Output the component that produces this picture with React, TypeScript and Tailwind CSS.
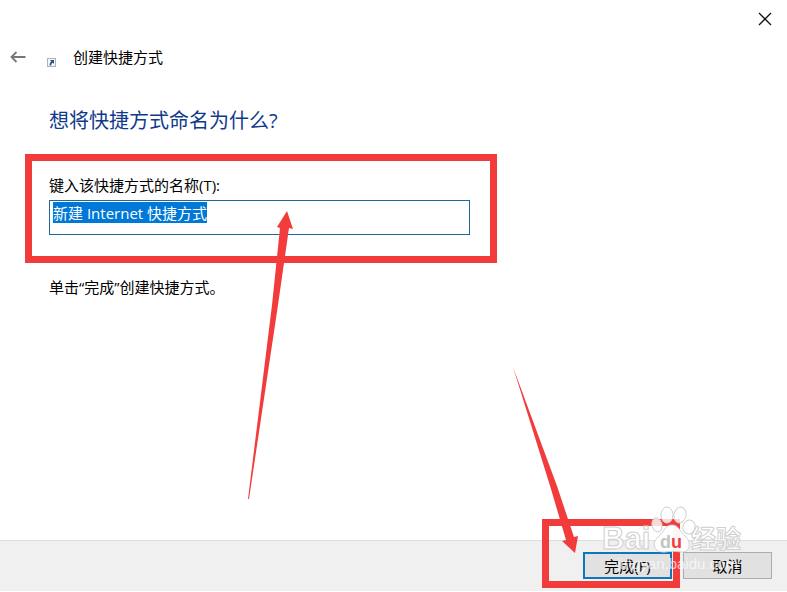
import { useEffect, useRef } from "react";

const FONT = "font-['Open_Sans','Noto_Sans_CJK_SC',sans-serif]";

function BackIcon() {
  return (
    <svg width="16" height="12" viewBox="0 0 16 12" fill="none" stroke="#777" strokeWidth="1.8">
      <path d="M15.5 6H1.5M6.5 1L1.5 6l5 5" />
    </svg>
  );
}

function ShortcutIcon() {
  return (
    <svg width="9" height="9" viewBox="0 0 9 9">
      <rect x="0.5" y="0.5" width="8" height="8" fill="#f4f7fa" stroke="#a9b4c0" />
      <path d="M3 2h4v4L5.8 4.8C4.6 5.6 4.2 6.4 4.2 7.6H2.6C2.4 5.8 3 4.4 4.3 3.4z" fill="#2f5480" />
    </svg>
  );
}

function FieldArrow() {
  return (
    <svg className="pointer-events-none absolute top-[35px] left-[198px]" width="50" height="292" viewBox="0 0 50 292">
      <path d="M1 289L25 95L33 18L30 17L40 1L46 19L42 18L31 95L2 289z" fill="#f23c3c" />
    </svg>
  );
}

function FinishArrow() {
  return (
    <svg className="pointer-events-none absolute right-[208px] bottom-[37px]" width="68" height="188" viewBox="0 0 68 188">
      <path d="M2 1L40 123L55 174L51 175L64 187L67 170L63 171L46 120z" fill="#f23c3c" />
    </svg>
  );
}

function Watermark() {
  return (
    <svg
      className="pointer-events-none absolute right-[36px] bottom-[12px] font-['Liberation_Sans','Noto_Sans_CJK_SC',sans-serif]"
      width="152"
      height="74"
      viewBox="0 0 152 74"
      fill="#fff"
      fillOpacity="0.8"
      stroke="#cfcfcf"
      strokeWidth="1"
    >
      <text x="3" y="44" fontSize="31" fontWeight="700">Bai</text>
      <text x="92" y="43" fontSize="25" fontWeight="700">经验</text>
      <ellipse cx="58" cy="20" rx="5" ry="7" transform="rotate(-15 58 20)" />
      <ellipse cx="68" cy="10" rx="6" ry="8" />
      <ellipse cx="81" cy="10" rx="6" ry="8" transform="rotate(12 81 10)" />
      <ellipse cx="90" cy="22" rx="6" ry="7" transform="rotate(20 90 22)" />
      <path d="M73 20c7 0 8 7 13 11 7 6 5 17-4 16-6-1-10-1-16 0-11 1-14-9-7-15 6-5 7-12 14-12z" fillOpacity="0.95" />
      <text x="61" y="43" fontSize="18" fontWeight="700" fill="#c4c4c4" fillOpacity="1" stroke="none">
        d<tspan fill="#f23c3c">u</tspan>
      </text>
      <text x="18" y="64" fontSize="15" stroke="none" fillOpacity="0.7">jingyan.baidu.com</text>
    </svg>
  );
}

export default function App() {
  const nameRef = useRef<HTMLInputElement>(null);

  useEffect(() => {
    nameRef.current?.focus();
    nameRef.current?.select();
  }, []);

  return (
    <div className={`${FONT} flex min-h-screen flex-col bg-white pb-px text-[15px] leading-5 text-black`}>
      <div className="flex h-10 justify-end pt-3 pr-[15px]">
        <button type="button" aria-label="关闭" className="h-[14px] w-[14px]">
          <svg width="14" height="14" viewBox="0 0 14 14" stroke="#111" strokeWidth="1.3">
            <path d="M1 1l12 12M13 1L1 13" />
          </svg>
        </button>
      </div>

      <header className="flex h-[34px] items-center pl-[10px]">
        <button type="button" aria-label="返回">
          <BackIcon />
        </button>
        <span className="ml-[21px] pt-[10px]">
          <ShortcutIcon />
        </span>
        <span className="ml-[17px]">创建快捷方式</span>
      </header>

      <main className="grow px-[49px] pt-8">
        <h1 className="text-[20px] leading-[30px] text-[#103a8c]">想将快捷方式命名为什么?</h1>

        <form className="relative mt-[39px] max-w-[421px]">
          <label htmlFor="shortcut-name" className="block h-[25px]">
            键入该快捷方式的名称(T):
          </label>
          <input
            ref={nameRef}
            id="shortcut-name"
            type="text"
            defaultValue="新建 Internet 快捷方式"
            className="block h-[35px] w-full border border-[#1a6a9c] bg-white px-[3px] pt-0 pb-[10px] leading-5 outline-none selection:bg-[#0078d7] selection:text-white"
          />
          <div className="pointer-events-none absolute -top-[21px] -right-[27px] -bottom-7 -left-6 border-[7px] border-[#f23c3c]" />
          <p className="absolute top-[102px] left-0">单击“完成”创建快捷方式。</p>
          <FieldArrow />
        </form>
      </main>

      <footer className="relative flex h-[51px] items-start justify-end gap-[11px] border-t border-[#dfdfdf] bg-[#f0f0f0] pt-[11px] pr-[15px]">
        <button type="button" className="h-[27px] w-[89px] border-2 border-[#0e76bd] bg-[#e1e1e1]">
          完成(F)
        </button>
        <button type="button" className="h-[27px] w-[89px] border border-[#adadad] bg-[#e1e1e1]">
          取消
        </button>
        <div className="pointer-events-none absolute right-[107px] bottom-[3px] h-[69px] w-[138px] border-[7px] border-[#f23c3c]" />
        <FinishArrow />
        <Watermark />
      </footer>
    </div>
  );
}
